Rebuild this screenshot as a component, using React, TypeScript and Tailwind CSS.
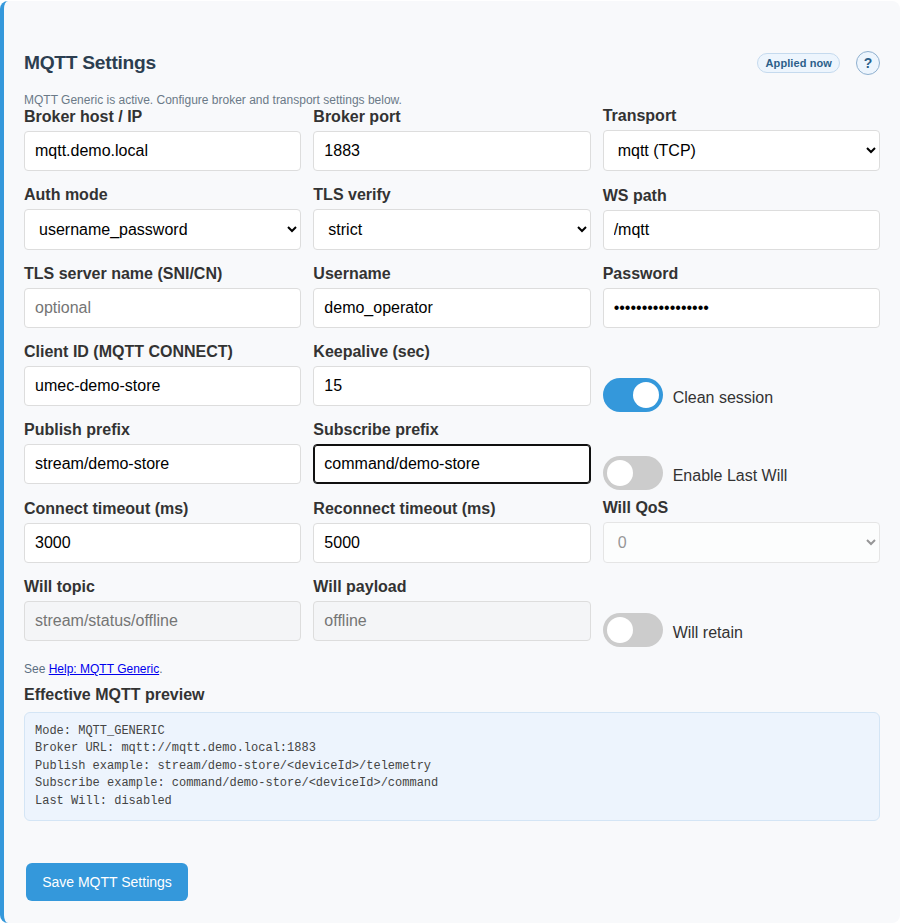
import type { ReactNode } from 'react';

const control =
  'block w-full rounded border border-[#dddddd] bg-white text-base text-black outline-none';

function Field({ label, children }: { label: string; children: ReactNode }) {
  return (
    <label className="block">
      <span className="mb-[5px] block text-base leading-[18px] font-bold whitespace-nowrap">{label}</span>
      {children}
    </label>
  );
}

type TextProps = {
  label: string;
  value?: string;
  placeholder?: string;
  type?: string;
  disabled?: boolean;
  active?: boolean;
};

function TextField({ label, value = '', placeholder, type = 'text', disabled, active }: TextProps) {
  return (
    <Field label={label}>
      <input
        type={type}
        defaultValue={value}
        placeholder={placeholder}
        disabled={disabled}
        className={`${control} h-10 px-2.5 placeholder:text-[#757575] ${
          active
            ? 'border-[#101010]! ring-1 ring-[#101010] ring-inset'
            : disabled
              ? 'bg-[#f4f5f7]! text-[#757575]!'
              : ''
        }`}
      />
    </Field>
  );
}

function SelectField({ label, value, disabled }: { label: string; value: string; disabled?: boolean }) {
  return (
    <Field label={label}>
      <select disabled={disabled} className={`${control} h-[41px] px-2.5 ${disabled ? 'text-[#6d6d6d]! opacity-70!' : ''}`}>
        <option>{value}</option>
      </select>
    </Field>
  );
}

function Toggle({ label, on }: { label: string; on?: boolean }) {
  return (
    <div className="mb-[-6px] flex h-[34px] items-center gap-2.5">
      <span className={`flex h-[34px] w-[60px] items-center rounded-full px-1 ${on ? 'justify-end bg-[#3498db]' : 'bg-[#cccccc]'}`}>
        <span className="size-[26px] rounded-full bg-white" />
      </span>
      <span className="pt-1.5 text-base leading-[18px]">{label}</span>
    </div>
  );
}

const preview = `Mode: MQTT_GENERIC
Broker URL: mqtt://mqtt.demo.local:1883
Publish example: stream/demo-store/<deviceId>/telemetry
Subscribe example: command/demo-store/<deviceId>/command
Last Will: disabled`;

export default function App() {
  return (
    <div className="h-[924px] bg-white pt-px font-['Liberation_Sans',Arial,sans-serif] text-[#333333]">
      <section className="h-[922px] rounded-lg border-l-4 border-[#3498db] bg-[#f8f9fb] px-5 pt-[50px]">
        <header className="flex h-6 items-center justify-between">
          <h2 className="text-[19.2px] leading-6 font-bold tracking-[-0.27px] text-[#2c3e50]">MQTT Settings</h2>
          <div className="flex items-center gap-4">
            <span className="flex h-5 items-center rounded-full border border-[#c5daee] bg-[#edf5fd] pr-[7px] pl-[7.5px] text-[11px] font-bold tracking-[0.1px] text-[#2c5f8a]">
              Applied now
            </span>
            <button className="flex size-6 items-center justify-center rounded-full border border-[#8fb0cf] bg-[#edf5fd] text-sm leading-none font-bold text-[#2c5f8a]">
              ?
            </button>
          </div>
        </header>
        <p className="mt-[18px] h-[14px] text-xs leading-[14px] text-[#6b7a88]">
          MQTT Generic is active. Configure broker and transport settings below.
        </p>
        <div className="grid grid-cols-3 grid-rows-[64px_79px_78px_78px_78px_79px_78px] items-end gap-x-3">
          <TextField label="Broker host / IP" value="mqtt.demo.local" />
          <TextField label="Broker port" value="1883" />
          <SelectField label="Transport" value="mqtt (TCP)" />
          <SelectField label="Auth mode" value="username_password" />
          <SelectField label="TLS verify" value="strict" />
          <TextField label="WS path" value="/mqtt" />
          <TextField label="TLS server name (SNI/CN)" placeholder="optional" />
          <TextField label="Username" value="demo_operator" />
          <TextField label="Password" type="password" value="demo-password-123" />
          <TextField label="Client ID (MQTT CONNECT)" value="umec-demo-store" />
          <TextField label="Keepalive (sec)" value="15" />
          <Toggle label="Clean session" on />
          <TextField label="Publish prefix" value="stream/demo-store" />
          <TextField label="Subscribe prefix" value="command/demo-store" active />
          <Toggle label="Enable Last Will" />
          <TextField label="Connect timeout (ms)" value="3000" />
          <TextField label="Reconnect timeout (ms)" value="5000" />
          <SelectField label="Will QoS" value="0" disabled />
          <TextField label="Will topic" placeholder="stream/status/offline" disabled />
          <TextField label="Will payload" value="offline" disabled />
          <Toggle label="Will retain" />
        </div>
        <p className="mt-[21px] text-xs leading-[14px] text-[#5c6f82]">
          See <a href="#help" className="text-[#0000ee] underline">Help: MQTT Generic</a>.
        </p>
        <h3 className="mt-[10px] text-base leading-[18px] font-bold">Effective MQTT preview</h3>
        <pre className="mt-[8px] h-[109px] rounded-md border border-[#d4e5f5] bg-[#edf4fd] p-2.5 font-['Liberation_Mono',monospace] text-xs leading-[1.45] text-[#444444]">
          {preview}
        </pre>
        <button className="mt-[42px] ml-0.5 flex h-[38px] w-[162px] items-center justify-center rounded-md bg-[#3498db] text-sm text-white">
          Save MQTT Settings
        </button>
      </section>
    </div>
  );
}
